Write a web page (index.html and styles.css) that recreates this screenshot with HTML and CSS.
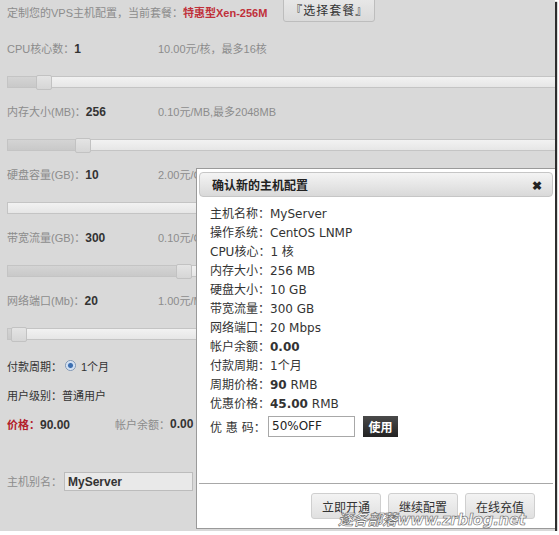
FILE: index.html
```html
<!DOCTYPE html>
<html lang="zh">
<head>
<meta charset="utf-8">
<title>定制VPS主机配置</title>
<link rel="stylesheet" href="styles.css">
</head>
<body>
<div class="page">
  <div class="top">
    <span class="muted">定制您的VPS主机配置，当前套餐：</span><span class="plan">特惠型Xen-256M</span>
    <span class="choose">『选择套餐』</span>
  </div>

  <div class="field">
    <div class="info"><span class="lab"><span class="muted">CPU核心数：</span><b>1</b></span><span class="muted">10.00元/核，最多16核</span></div>
    <div class="slider"><div class="fill" style="width:28px"></div><div class="knob"></div></div>
  </div>
  <div class="field">
    <div class="info"><span class="lab"><span class="muted">内存大小(MB)：</span><b>256</b></span><span class="muted">0.10元/MB,最多2048MB</span></div>
    <div class="slider"><div class="fill" style="width:67px"></div><div class="knob"></div></div>
  </div>
  <div class="field">
    <div class="info"><span class="lab"><span class="muted">硬盘容量(GB)：</span><b>10</b></span><span class="muted">2.00元/GB</span></div>
    <div class="slider"><div class="fill light" style="width:300px"></div><div class="knob"></div></div>
  </div>
  <div class="field">
    <div class="info"><span class="lab"><span class="muted">带宽流量(GB)：</span><b>300</b></span><span class="muted">0.10元/GB</span></div>
    <div class="slider"><div class="fill" style="width:168px"></div><div class="knob"></div></div>
  </div>
  <div class="field">
    <div class="info"><span class="lab"><span class="muted">网络端口(Mb)：</span><b>20</b></span><span class="muted">1.00元/Mb</span></div>
    <div class="slider"><div class="fill" style="width:3px"></div><div class="knob"></div></div>
  </div>

  <div class="row first"><span class="dark">付款周期：</span><span class="radio"></span><span class="dark">1个月</span></div>
  <div class="row"><span class="dark">用户级别：普通用户</span></div>
  <div class="row"><span class="lab2"><span class="red">价格：</span><b>90.00</b></span><span class="muted">帐户余额：</span><b>0.00</b></div>
  <div class="row alias"><span class="muted">主机别名：</span><span class="aliasbox">MyServer</span></div>

  <div class="modal">
    <div class="mhead"><span>确认新的主机配置</span><span class="close">✖</span></div>
    <div class="mbody">
      <div class="line">主机名称：MyServer</div>
      <div class="line">操作系统：CentOS LNMP</div>
      <div class="line">CPU核心：1 核</div>
      <div class="line">内存大小：256 MB</div>
      <div class="line">硬盘大小：10 GB</div>
      <div class="line">带宽流量：300 GB</div>
      <div class="line">网络端口：20 Mbps</div>
      <div class="line">帐户余额：<b>0.00</b></div>
      <div class="line">付款周期：1个月</div>
      <div class="line">周期价格：<b>90</b> RMB</div>
      <div class="line">优惠价格：<b>45.00</b> RMB</div>
      <div class="coupon"><span class="clab">优 惠 码：</span><span class="cinput">50%OFF</span><span class="use">使用</span></div>
    </div>
    <div class="mfoot">
      <span class="btn">立即开通</span><span class="btn">继续配置</span><span class="btn">在线充值</span>
    </div>
  </div>
  <div class="mark">逐各部落www.zrblog.net</div>
</div>
</body>
</html>
```

FILE: styles.css
```css
html, body {
  margin: 0;
  padding: 0;
  background: #ffffff;
}
.page {
  position: relative;
  width: 555px;
  height: 531px;
  box-sizing: border-box;
  padding-left: 7px;
  background: #d9d9d9;
  box-shadow: 2px 2px 1px #2e2e2e;
  overflow: hidden;
  font-family: "Liberation Sans", Arial, "Noto Sans CJK SC", sans-serif;
  font-size: 11px;
  color: #333;
}
.muted { color: #8c8c8c; }
.dark { color: #333; }
b { font-weight: bold; color: #333; }
.top {
  display: flex;
  align-items: flex-start;
  height: 26px;
  line-height: 26px;
}
.plan {
  color: #c0303a;
  font-weight: bold;
}
.choose {
  margin-left: 16px;
  margin-top: -3px;
  width: 92px;
  height: 25px;
  line-height: 27px;
  text-align: center;
  box-sizing: border-box;
  border: 1px solid #bdbdbd;
  border-radius: 0 0 3px 3px;
  background: linear-gradient(#e8e8e8, #dadada);
  color: #333;
  font-size: 12px;
  letter-spacing: 1px;
}
.field { padding-top: 10px; }
.field + .field { padding-top: 0; }
.info {
  display: flex;
  height: 26px;
  line-height: 26px;
}
.lab {
  width: 151px;
  flex: none;
}
.lab b { font-size: 12px; }
.slider {
  display: flex;
  align-items: center;
  margin: 14px 0 11px 0;
  height: 12px;
  box-sizing: border-box;
  border: 1px solid #c4c4c4;
  border-right: none;
  background: linear-gradient(#f2f2f2, #e6e6e6);
}
.fill {
  height: 10px;
  background: linear-gradient(#d4d4d4, #c9c9c9);
  flex: none;
}
.fill.light { background: transparent; }
.knob {
  flex: none;
  width: 16px;
  height: 15px;
  box-sizing: border-box;
  border: 1px solid #c2c2c2;
  background: linear-gradient(#e4e4e4, #d6d6d6);
  border-radius: 2px;
}
.row {
  display: flex;
  align-items: center;
  height: 29px;
}
.row.first { margin-top: 2px; }
.row b { font-size: 12px; }
.lab2 { width: 108px; flex: none; }
.red { color: #b3202a; font-weight: bold; }
.radio {
  width: 9px;
  height: 9px;
  border-radius: 50%;
  border: 1px solid #7f97b5;
  background: radial-gradient(circle, #3d6fb0 0 2px, #c9daf0 3px, #eef3fa 5px);
  margin: 0 5px 0 3px;
}
.alias {
  margin-top: 32px;
  height: 22px;
}
.aliasbox {
  margin-left: 2px;
  width: 129px;
  height: 19px;
  line-height: 19px;
  box-sizing: border-box;
  padding-left: 3px;
  border: 1px solid #bcbcbc;
  background: #e9e9e9;
  font-weight: bold;
  font-size: 12px;
  color: #333;
}
.modal {
  position: absolute;
  left: 196px;
  top: 168px;
  width: 360px;
  height: 361px;
  box-sizing: border-box;
  border: 1px solid #9a9a9a;
  border-right: none;
  background: #ffffff;
  padding: 3px 3px 0 2px;
  display: flex;
  flex-direction: column;
  font-family: "DejaVu Sans", Verdana, "Noto Sans CJK SC", sans-serif;
  font-size: 12px;
  color: #333;
}
.mhead {
  display: flex;
  justify-content: space-between;
  align-items: center;
  height: 25px;
  box-sizing: border-box;
  padding: 0 10px 0 12px;
  border: 1px solid #c6c6c6;
  border-radius: 4px;
  background: linear-gradient(#f4f4f4, #d9d9d9);
  font-family: "Noto Sans CJK SC", sans-serif;
  font-weight: bold;
  font-size: 12px;
  color: #222;
}
.close { font-size: 12px; color: #222; }
.mbody {
  padding: 8px 0 0 11px;
  flex: 1;
}
.line {
  height: 19px;
  line-height: 19px;
}
.coupon {
  display: flex;
  align-items: center;
  margin-top: 2px;
  height: 21px;
}
.clab { width: 58px; flex: none; }
.cinput {
  width: 87px;
  height: 21px;
  line-height: 19px;
  box-sizing: border-box;
  border: 1px solid #a8a8a8;
  padding-left: 3px;
  color: #222;
}
.use {
  margin-left: 8px;
  width: 35px;
  height: 21px;
  line-height: 21px;
  text-align: center;
  background: linear-gradient(#4a4a4a, #222);
  color: #fff;
  font-weight: bold;
  font-family: "Noto Sans CJK SC", sans-serif;
  font-size: 12px;
}
.mfoot {
  display: flex;
  justify-content: flex-end;
  gap: 7px;
  border-top: 1px solid #a8a8a8;
  padding: 9px 18px 0 0;
  height: 42px;
  box-sizing: border-box;
  margin-bottom: 3px;
}
.btn {
  width: 70px;
  height: 26px;
  line-height: 26px;
  text-align: center;
  box-sizing: border-box;
  border: 1px solid #cfcfcf;
  border-radius: 3px;
  background: linear-gradient(#f3f3f3, #e0e0e0);
  font-family: "Noto Sans CJK SC", sans-serif;
  font-size: 12px;
  color: #333;
}
.mark {
  position: absolute;
  left: 338px;
  top: 508px;
  font-family: "DejaVu Sans", "Noto Sans CJK SC", sans-serif;
  font-size: 15px;
  font-style: italic;
  font-weight: bold;
  letter-spacing: -0.3px;
  color: rgba(255,255,255,0.55);
  -webkit-text-stroke: 0.6px #666;
  white-space: nowrap;
}
```
